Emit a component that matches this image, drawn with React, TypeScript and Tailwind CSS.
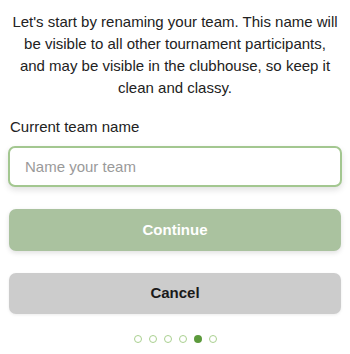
import React from "react";

export default function App() {
  const dots = [false, false, false, false, true, false];
  return (
    <div className="w-[350px] h-[354px] bg-white px-2 pt-[11px] font-['Liberation_Sans',Arial,sans-serif] text-[#222]">
      <p className="text-center text-[15px] leading-[22px] px-[4px]">
        Let's start by renaming your team. This name will be visible to all other tournament participants, and may be visible in the clubhouse, so keep it clean and classy.
      </p>
      <div className="mt-[17px] pl-[2px] text-[15px] leading-[22px]">Current team name</div>
      <input
        placeholder="Name your team"
        className="mt-[8px] block w-full h-[41px] rounded-[7px] border-2 border-[#a3c790] bg-white px-[15px] text-[15px] text-[#222] placeholder:text-[#9a9a9a] shadow-[0_3px_6px_rgba(0,0,0,0.12)] outline-none"
      />
      <button className="mt-[22px] block w-[332px] ml-[1px] h-[42px] rounded-[7px] bg-[#aac29f] text-white font-bold text-[15px] shadow-[0_2px_5px_rgba(0,0,0,0.12)]">
        Continue
      </button>
      <button className="mt-[22px] block w-[332px] ml-[1px] h-[41px] rounded-[7px] bg-[#cccccc] text-[#1a1a1a] font-bold text-[15px] shadow-[0_1px_3px_rgba(0,0,0,0.08)]">
        Cancel
      </button>
      <div className="mt-[21px] flex justify-center gap-[7px] pl-[1px]">
        {dots.map((active, i) =>
          active ? (
            <span key={i} className="block w-[8px] h-[8px] rounded-full bg-[#5c9a3c]" />
          ) : (
            <span key={i} className="block w-[8px] h-[8px] rounded-full border border-[#a9d08f]" />
          )
        )}
      </div>
    </div>
  );
}
